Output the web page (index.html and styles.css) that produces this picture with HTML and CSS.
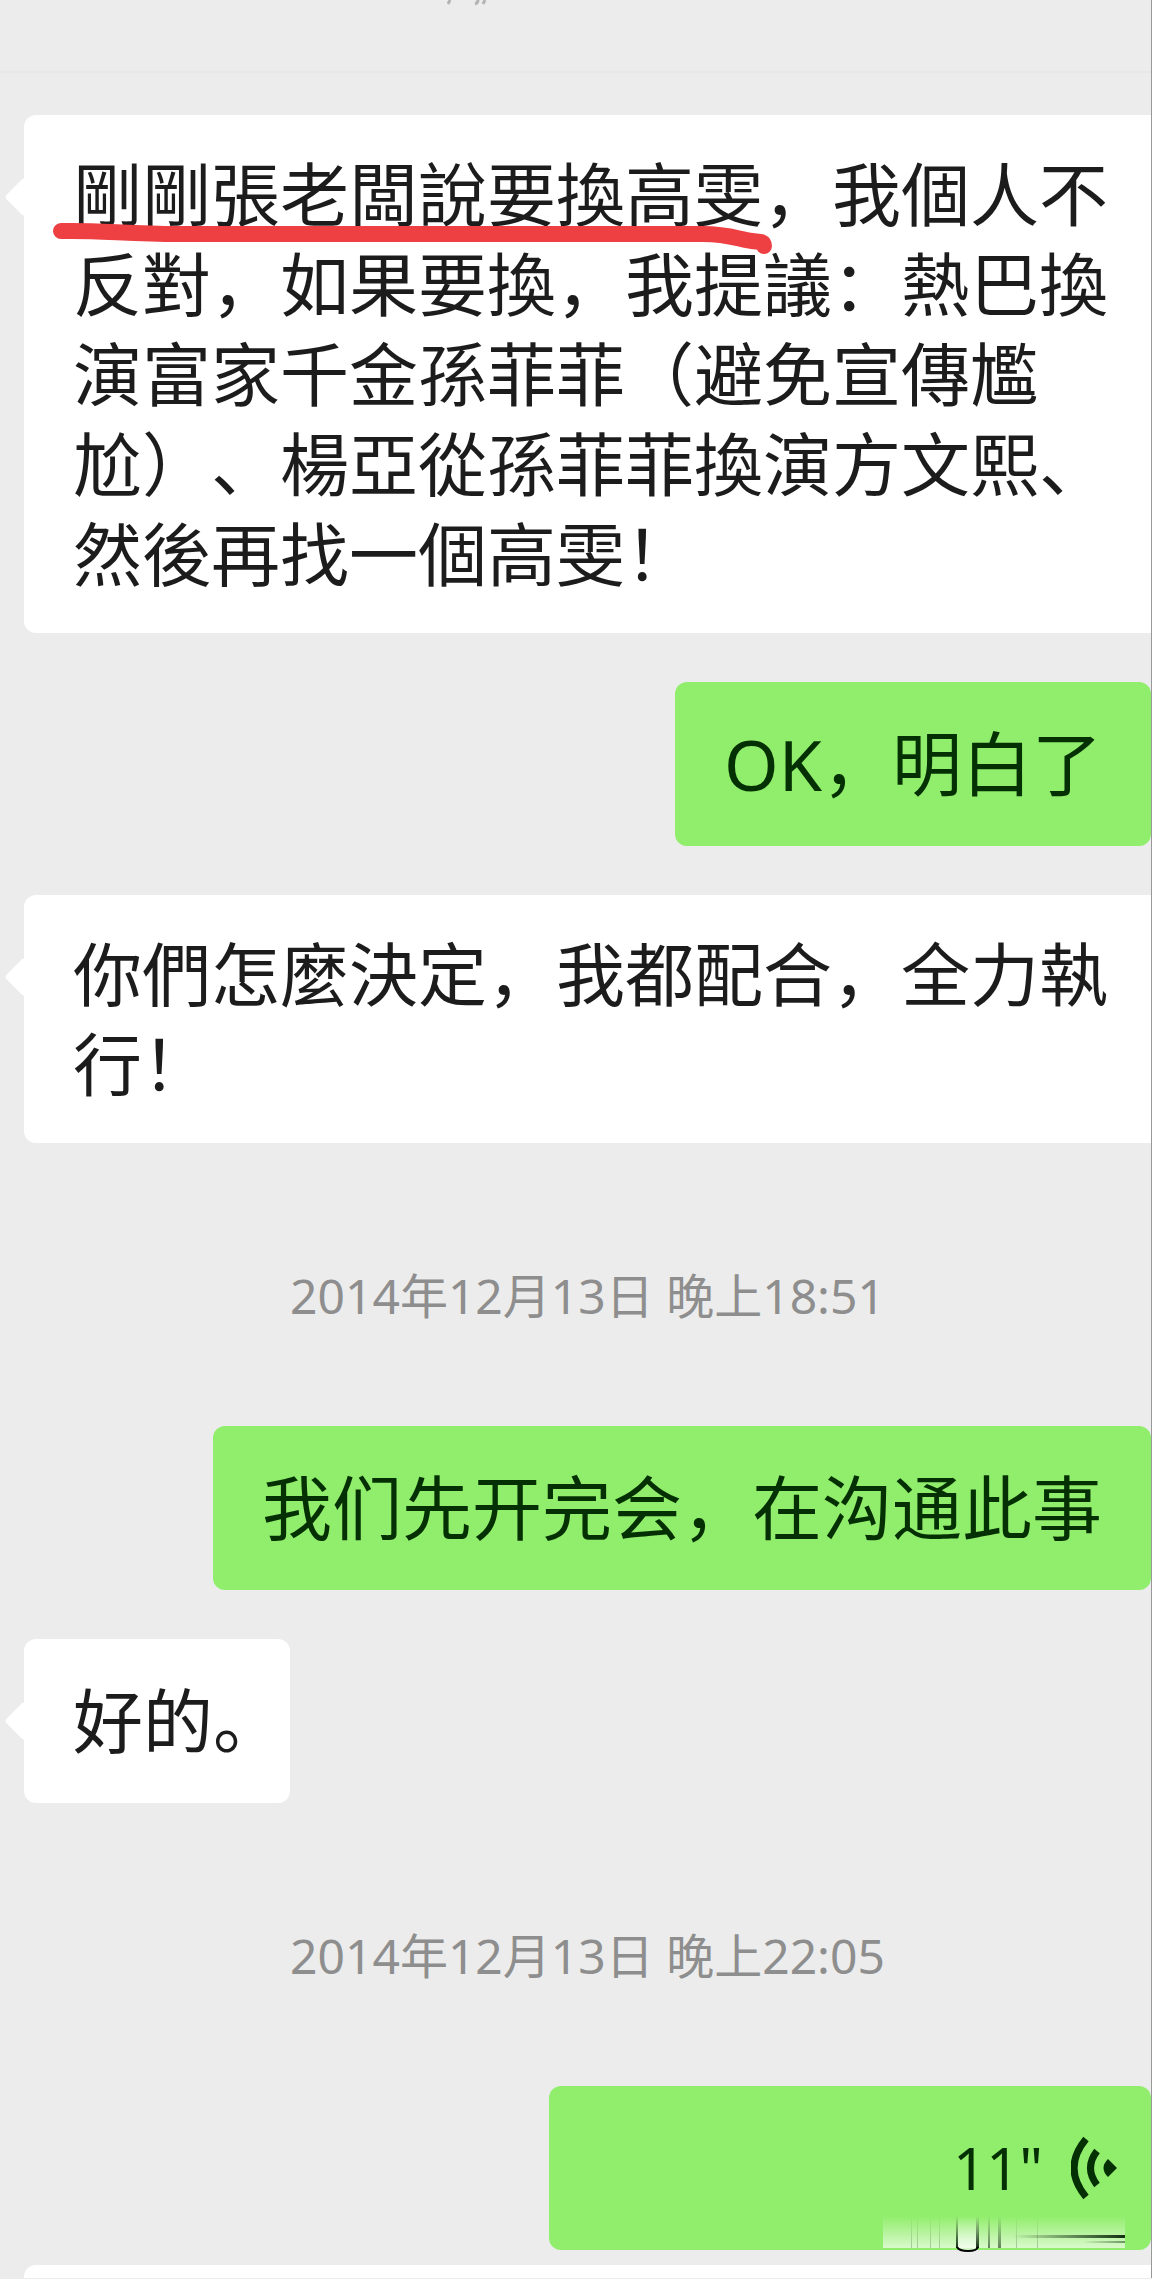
FILE: index.html
```html
<!DOCTYPE html>
<html lang="zh-CN">
<head>
    <meta charset="UTF-8">
    <meta name="viewport" content="width=device-width, initial-scale=1.0">
    <title>聊天</title>
    <link rel="stylesheet" href="styles.css">
</head>
<body>
    <div class="chat">
        <header class="bar">
            <svg class="bar_mark" width="40" height="6" viewBox="0 0 40 6">
                <path d="M3 0L1 4M31 0Q31 3 28 4M38 0L36 4" fill="none" stroke="#b4b4b4" stroke-width="3"/>
            </svg>
        </header>
        <main class="list">
            <div class="row left">
                <div class="bubble white tail wide">
                    <p>剛剛張老闆說要換高雯，我個人不反對，如果要換，我提議：熱巴換演富家千金孫菲菲（避免宣傳尷尬）、楊亞從孫菲菲換演方文熙、然後再找一個高雯！</p>
                    <!-- 红线 -->
                    <svg class="mark" width="730" height="40" viewBox="0 0 730 40">
                        <path d="M13 12C50 11 80 15 130 15H655C680 15 690 20 704 22C712 23 716 22 716 27" fill="none" stroke="#ee3f43" stroke-width="16" stroke-linecap="round" stroke-linejoin="round"/>
                    </svg>
                </div>
            </div>
            <div class="row right">
                <div class="bubble green"><p>OK，明白了</p></div>
            </div>
            <div class="row left">
                <div class="bubble white tail wide"><p>你們怎麼決定，我都配合，全力執行！</p></div>
            </div>
            <time class="time" datetime="2014-12-13T18:51">2014年12月13日 晚上18:51</time>
            <div class="row right">
                <div class="bubble green"><p>我们先开完会，在沟通此事</p></div>
            </div>
            <div class="row left">
                <div class="bubble white tail short"><p>好的。</p></div>
            </div>
            <time class="time" datetime="2014-12-13T22:05">2014年12月13日 晚上22:05</time>
            <div class="row right last">
                <button class="bubble green voice" type="button">
                    <span>11"</span>
                    <svg width="46" height="66" viewBox="0 0 46 66">
                        <path d="M15 4Q-9 33 15 62M26 16Q13 33 26 50" fill="none" stroke="#053003" stroke-width="7"/>
                        <path d="M37 24L46 33L37 42Q28 33 37 24Z" fill="#053003"/>
                    </svg>
                    <svg class="smear" width="242" height="38" viewBox="0 0 242 38">
                        <defs>
                            <linearGradient id="fade" x1="0" y1="0" x2="0" y2="1">
                                <stop offset="0" stop-color="#fff" stop-opacity="0"/>
                                <stop offset="1" stop-color="#fff" stop-opacity=".65"/>
                            </linearGradient>
                            <linearGradient id="ink" x1="0" y1="0" x2="0" y2="1">
                                <stop offset="0" stop-color="#123010" stop-opacity="0"/>
                                <stop offset="1" stop-color="#123010"/>
                            </linearGradient>
                            <linearGradient id="dash" x1="0" y1="0" x2="1" y2="0">
                                <stop offset="0" stop-color="#123010" stop-opacity="0"/>
                                <stop offset="1" stop-color="#123010"/>
                            </linearGradient>
                        </defs>
                        <path d="M0 0H242V32H0Z" fill="url(#fade)"/>
                        <path d="M75 0H95V32Q85 37 75 32Z" fill="url(#fade)"/>
                        <path d="M73 0H75V32H73ZM93 0H96V32H93Z" fill="url(#ink)"/>
                        <path d="M105 0H107V32H105ZM115 0H118V32H115Z" fill="url(#ink)" opacity=".6"/>
                        <path d="M28 0H29V32H28ZM34 0H35V32H34ZM47 0H48V32H47ZM56 0H57V32H56ZM133 0H134V32H133ZM154 0H155V32H154Z" fill="url(#ink)" opacity=".25"/>
                        <path d="M74 31Q76 35 85 35Q94 35 95 31" fill="none" stroke="#000" stroke-width="2"/>
                        <path d="M130 19H242V22H130Z" fill="url(#dash)"/>
                        <path d="M200 25H242V27H200Z" fill="url(#dash)" opacity=".5"/>
                    </svg>
                </button>
            </div>
            <div class="row left">
                <div class="next"></div>
            </div>
        </main>
    </div>
</body>
</html>
```
FILE: styles.css
```css
*{margin: 0;padding: 0;box-sizing: border-box;}
body{background: #ececec;color: #1c1c1c;font: 70px/90px "Noto Sans","Noto Sans CJK SC",sans-serif;text-spacing-trim: space-all;}

.chat{border-right: 1px solid #999;overflow: hidden;}

.bar{height: 73px;padding-left: 447px;border-bottom: 2px solid #e7e7e7;}
.bar_mark{display: block;}

.list{padding-top: 42px;}
.row{display: flex;padding-left: 24px;}
.row + .row{margin-top: 49px;}
.right{justify-content: flex-end;}

.bubble{position: relative;display: flex;align-items: center;min-height: 164px;padding: 34px 49px;border-radius: 12px;}
.white{background: #fff;}
.green{background: #91ee6c;color: #053003;}
.wide{flex: 1;padding-right: 24px;border-radius: 12px 0 0 12px;font-size: 69px;}
.short{padding-right: 7px;}

/* 左边小三角 */
.tail::before{content: "";position: absolute;left: -14px;top: 68px;width: 28px;height: 28px;background: #fff;border-radius: 4px;transform: rotate(45deg);}
.tail p{position: relative;}

.mark{position: absolute;left: 24px;top: 104px;}

.time{display: block;height: 283px;padding: 118px 0 0 24px;text-align: center;font-size: 48px;line-height: 70px;color: #8e8e8e;}

.voice{width: 602px;justify-content: flex-end;gap: 28px;padding-right: 34px;border: 0;font: inherit;font-size: 58px;}
.smear{position: absolute;right: 26px;bottom: -4px;}

.last + .row{margin-top: 15px;}
.next{flex: 1;height: 13px;background: #fff;border-radius: 12px 0 0 0;}
```
